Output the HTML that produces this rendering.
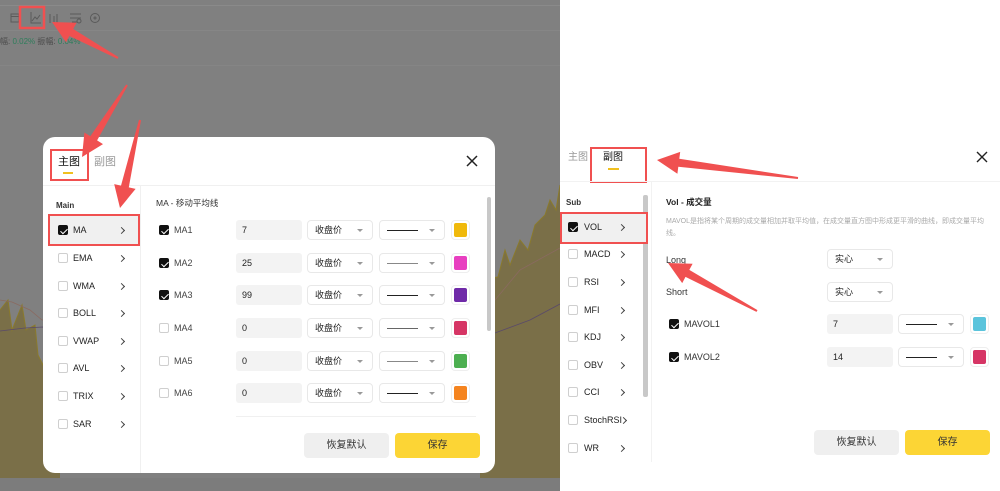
<!DOCTYPE html>
<html><head><meta charset="utf-8"><style>
*{margin:0;padding:0;box-sizing:border-box}
body{width:1000px;height:491px;overflow:hidden;position:relative;background:#fff;font-family:"Liberation Sans","Noto Sans CJK SC",sans-serif;color:#222}
.a{position:absolute}
.t{position:absolute;font-size:9px;line-height:12px;white-space:nowrap}
.cb{position:absolute;width:10px;height:10px;border:1px solid #cfcfcf;border-radius:2px;background:#fff}
.cb.on{background:#111;border-color:#111}
.cb.on::after{content:"";position:absolute;left:2.5px;top:0.5px;width:3px;height:6px;border:solid #fff;border-width:0 1.5px 1.5px 0;transform:rotate(45deg)}
.chev{position:absolute;width:5px;height:5px;border:solid #444;border-width:1.2px 1.2px 0 0;transform:rotate(45deg)}
.inp{position:absolute;background:#f3f3f3;border-radius:3px;height:20px;font-size:9px;line-height:20px;padding-left:6px;color:#222}
.sel{position:absolute;border:1px solid #e8e8e8;border-radius:4px;height:20px;font-size:9px;line-height:18px;padding-left:7px;background:#fff}
.sel::after{content:"";position:absolute;right:9px;top:8px;border:3px solid transparent;border-top:3.5px solid #999}
.ln{position:absolute;left:7px;top:9px;width:31px;height:1px;background:#222}
.sw{position:absolute;width:19px;height:20px;border:1px solid #eee;border-radius:4px;background:#fff}
.sw i{position:absolute;left:2px;top:2px;width:13px;height:14px;border-radius:2px}
.btn{position:absolute;border-radius:4px;font-size:10px;text-align:center;height:25px;line-height:25px}
</style></head><body>
<div class="a" style="left:0;top:0;width:560px;height:491px;background:#808080"></div>
<div class="a" style="left:0;top:5px;width:560px;height:1px;background:#8a8a8a"></div>
<div class="a" style="left:0;top:30px;width:560px;height:1px;background:#868686"></div>
<div class="a" style="left:0;top:65px;width:560px;height:1px;background:#858585"></div>
<svg class="a" style="left:0;top:0" width="560" height="491">
<polygon fill="#7a6f48" points="0,310 8,300 12,330 22,305 26,330 35,325 38,355 48,375 60,360 60,491 0,491"/>
<polyline fill="none" stroke="#8a7a2c" stroke-width="1" points="0,310 8,300 12,330 22,305 26,330 35,325 38,355 48,375 60,360"/>
<polygon fill="#7a6f48" points="480,280 498,277 505,250 510,265 520,240 528,250 535,225 545,215 550,200 556,210 560,185 560,491 480,491"/>
<polyline fill="none" stroke="#8a7a2c" stroke-width="1" points="480,280 498,277 505,250 510,265 520,240 528,250 535,225 545,215 550,200 556,210 560,185"/>
<polyline fill="none" stroke="#8a6a60" stroke-width="0.8" points="0,300 12,302 30,310 42,320 495,300 520,270 560,248"/>
<polyline fill="none" stroke="#5a4a6a" stroke-width="0.8" points="0,331 25,328 43,327 495,333 530,320 560,304"/>
<rect x="0" y="478" width="560" height="13" fill="#7c7c7c"/>
</svg>
<svg class="a" style="left:0;top:0" width="120" height="50">
<g fill="none" stroke="#5a5a5a" stroke-width="1">
<rect x="11" y="14" width="8" height="8"/><line x1="11" y1="16.5" x2="19" y2="16.5"/>
<polyline points="31,12 31,23 41,23"/><polyline points="32,21 35,17 37,19 40,15"/>
<path d="M50 14v9M54 16v7M57 14v9"/>
<path d="M70 14h11M70 18h11M72 22h5"/><circle cx="79" cy="21" r="2"/>
<circle cx="95" cy="18" r="4.5"/><circle cx="95" cy="18" r="1"/>
</g>
<rect x="20" y="7" width="24" height="21" fill="none" stroke="#f05050" stroke-width="2.5"/>
</svg>
<div class="t" style="left:0;top:36px;font-size:8px;color:#4a4a4a">幅: <span style="color:#2e7d5b">0.02%</span> 振幅: <span style="color:#2e7d5b">0.04%</span></div>

<div class="a" style="left:43px;top:137px;width:452px;height:336px;background:#fff;border-radius:12px"></div>
<div class="t" style="left:58px;top:156px;font-size:11px;color:#111">主图</div>
<div class="t" style="left:94px;top:156px;font-size:11px;color:#999">副图</div>
<div class="a" style="left:63px;top:172px;width:10px;height:2px;background:#f0c020"></div>
<div class="a" style="left:50px;top:149px;width:39px;height:32px;border:2.5px solid #f05050"></div>
<svg class="a" style="left:465px;top:154px" width="14" height="14"><path d="M2 2L12 12M12 2L2 12" stroke="#222" stroke-width="1.5"/></svg>
<div class="a" style="left:43px;top:185px;width:452px;height:1px;background:#f0f0f0"></div>
<div class="a" style="left:140px;top:186px;width:1px;height:287px;background:#f0f0f0"></div>
<div class="t" style="left:56px;top:200px;font-size:8px;font-weight:bold;color:#333">Main</div>
<div class="a" style="left:48px;top:214px;width:92px;height:32px;background:#f0f0f0;border:2.5px solid #f05050"></div>
<div class="cb on" style="left:58px;top:225px"></div><div class="t" style="left:73px;top:224px">MA</div><div class="chev" style="left:119px;top:228px"></div>
<div class="cb" style="left:58px;top:253px"></div><div class="t" style="left:73px;top:252px">EMA</div><div class="chev" style="left:119px;top:256px"></div>
<div class="cb" style="left:58px;top:281px"></div><div class="t" style="left:73px;top:280px">WMA</div><div class="chev" style="left:119px;top:284px"></div>
<div class="cb" style="left:58px;top:308px"></div><div class="t" style="left:73px;top:307px">BOLL</div><div class="chev" style="left:119px;top:311px"></div>
<div class="cb" style="left:58px;top:336px"></div><div class="t" style="left:73px;top:335px">VWAP</div><div class="chev" style="left:119px;top:339px"></div>
<div class="cb" style="left:58px;top:363px"></div><div class="t" style="left:73px;top:362px">AVL</div><div class="chev" style="left:119px;top:366px"></div>
<div class="cb" style="left:58px;top:391px"></div><div class="t" style="left:73px;top:390px">TRIX</div><div class="chev" style="left:119px;top:394px"></div>
<div class="cb" style="left:58px;top:419px"></div><div class="t" style="left:73px;top:418px">SAR</div><div class="chev" style="left:119px;top:422px"></div>
<div class="t" style="left:156px;top:197px;font-size:8.5px;color:#333">MA - 移动平均线</div>

<div class="cb on" style="left:159px;top:225px"></div><div class="t" style="left:174px;top:224px;color:#444">MA1</div>
<div class="inp" style="left:236px;top:220px;width:66px">7</div><div class="sel" style="left:307px;top:220px;width:66px">收盘价</div><div class="sel" style="left:379px;top:220px;width:66px"><div class="ln"></div></div><div class="sw" style="left:451px;top:220px"><i style="background:#f0b90b"></i></div>
<div class="cb on" style="left:159px;top:258px"></div><div class="t" style="left:174px;top:257px;color:#444">MA2</div>
<div class="inp" style="left:236px;top:253px;width:66px">25</div><div class="sel" style="left:307px;top:253px;width:66px">收盘价</div><div class="sel" style="left:379px;top:253px;width:66px"><div class="ln" style="background:#888"></div></div><div class="sw" style="left:451px;top:253px"><i style="background:#e83fc0"></i></div>
<div class="cb on" style="left:159px;top:290px"></div><div class="t" style="left:174px;top:289px;color:#444">MA3</div>
<div class="inp" style="left:236px;top:285px;width:66px">99</div><div class="sel" style="left:307px;top:285px;width:66px">收盘价</div><div class="sel" style="left:379px;top:285px;width:66px"><div class="ln"></div></div><div class="sw" style="left:451px;top:285px"><i style="background:#6f2aa8"></i></div>
<div class="cb" style="left:159px;top:323px"></div><div class="t" style="left:174px;top:322px;color:#444">MA4</div>
<div class="inp" style="left:236px;top:318px;width:66px">0</div><div class="sel" style="left:307px;top:318px;width:66px">收盘价</div><div class="sel" style="left:379px;top:318px;width:66px"><div class="ln" style="background:#666"></div></div><div class="sw" style="left:451px;top:318px"><i style="background:#d63565"></i></div>
<div class="cb" style="left:159px;top:356px"></div><div class="t" style="left:174px;top:355px;color:#444">MA5</div>
<div class="inp" style="left:236px;top:351px;width:66px">0</div><div class="sel" style="left:307px;top:351px;width:66px">收盘价</div><div class="sel" style="left:379px;top:351px;width:66px"><div class="ln" style="background:#888"></div></div><div class="sw" style="left:451px;top:351px"><i style="background:#4caf50"></i></div>
<div class="cb" style="left:159px;top:388px"></div><div class="t" style="left:174px;top:387px;color:#444">MA6</div>
<div class="inp" style="left:236px;top:383px;width:66px">0</div><div class="sel" style="left:307px;top:383px;width:66px">收盘价</div><div class="sel" style="left:379px;top:383px;width:66px"><div class="ln"></div></div><div class="sw" style="left:451px;top:383px"><i style="background:#f5841f"></i></div>
<div class="a" style="left:236px;top:416px;width:240px;height:3px;border-top:1px solid #f0f0f0"></div>
<div class="a" style="left:487px;top:197px;width:4px;height:134px;background:#c8c8c8;border-radius:2px"></div>
<div class="btn" style="left:304px;top:433px;width:85px;background:#efefef;color:#333">恢复默认</div>
<div class="btn" style="left:395px;top:433px;width:85px;background:#fcd535;color:#333">保存</div>

<div class="t" style="left:568px;top:152px;font-size:10px;color:#999">主图</div>
<div class="t" style="left:603px;top:152px;font-size:10px;color:#111">副图</div>
<div class="a" style="left:608px;top:168px;width:11px;height:2px;background:#f0c020"></div>
<div class="a" style="left:590px;top:147px;width:57px;height:36px;border:2.5px solid #f05050"></div>
<svg class="a" style="left:975px;top:150px" width="14" height="14"><path d="M2 2L12 12M12 2L2 12" stroke="#222" stroke-width="1.4"/></svg>
<div class="a" style="left:560px;top:181px;width:440px;height:1px;background:#f2f2f2"></div>
<div class="a" style="left:651px;top:182px;width:1px;height:280px;background:#f2f2f2"></div>
<div class="a" style="left:643px;top:195px;width:5px;height:202px;background:#c8c8c8;border-radius:2px"></div>
<div class="t" style="left:566px;top:197px;font-size:8px;font-weight:bold;color:#333">Sub</div>
<div class="a" style="left:560px;top:212px;width:88px;height:32px;background:#f0f0f0;border:2.5px solid #f05050"></div>
<div class="cb on" style="left:568px;top:222px"></div><div class="t" style="left:584px;top:221px">VOL</div><div class="chev" style="left:619px;top:225px"></div>
<div class="cb" style="left:568px;top:249px"></div><div class="t" style="left:584px;top:248px">MACD</div><div class="chev" style="left:619px;top:252px"></div>
<div class="cb" style="left:568px;top:277px"></div><div class="t" style="left:584px;top:276px">RSI</div><div class="chev" style="left:619px;top:280px"></div>
<div class="cb" style="left:568px;top:305px"></div><div class="t" style="left:584px;top:304px">MFI</div><div class="chev" style="left:619px;top:308px"></div>
<div class="cb" style="left:568px;top:332px"></div><div class="t" style="left:584px;top:331px">KDJ</div><div class="chev" style="left:619px;top:335px"></div>
<div class="cb" style="left:568px;top:360px"></div><div class="t" style="left:584px;top:359px">OBV</div><div class="chev" style="left:619px;top:363px"></div>
<div class="cb" style="left:568px;top:387px"></div><div class="t" style="left:584px;top:386px">CCI</div><div class="chev" style="left:619px;top:390px"></div>
<div class="cb" style="left:568px;top:415px"></div><div class="t" style="left:584px;top:414px">StochRSI</div><div class="chev" style="left:621px;top:418px"></div>
<div class="cb" style="left:568px;top:443px"></div><div class="t" style="left:584px;top:442px">WR</div><div class="chev" style="left:619px;top:446px"></div>
<div class="t" style="left:666px;top:196px;font-size:8.5px;font-weight:bold;color:#222">Vol - 成交量</div>
<div class="a" style="left:666px;top:216px;width:322px;font-size:7px;line-height:11.5px;color:#aaa">MAVOL是指将某个周期的成交量相加并取平均值，在成交量直方图中形成更平滑的曲线，即成交量平均线。</div>
<div class="t" style="left:666px;top:254px;color:#333">Long</div>
<div class="sel" style="left:827px;top:249px;width:66px">实心</div>
<div class="t" style="left:666px;top:286px;color:#333">Short</div>
<div class="sel" style="left:827px;top:282px;width:66px">实心</div>
<div class="cb on" style="left:669px;top:319px"></div><div class="t" style="left:684px;top:318px;color:#333">MAVOL1</div>
<div class="inp" style="left:827px;top:314px;width:66px">7</div><div class="sel" style="left:898px;top:314px;width:66px"><div class="ln"></div></div><div class="sw" style="left:970px;top:314px"><i style="background:#5bc4dc"></i></div>
<div class="cb on" style="left:669px;top:352px"></div><div class="t" style="left:684px;top:351px;color:#333">MAVOL2</div>
<div class="inp" style="left:827px;top:347px;width:66px">14</div><div class="sel" style="left:898px;top:347px;width:66px"><div class="ln"></div></div><div class="sw" style="left:970px;top:347px"><i style="background:#d63565"></i></div>
<div class="btn" style="left:814px;top:430px;width:85px;background:#efefef;color:#333">恢复默认</div>
<div class="btn" style="left:905px;top:430px;width:85px;background:#fcd535;color:#333">保存</div>

<svg class="a" style="left:0;top:0" width="1000" height="491">
<g fill="#f05050">
<polygon points="118.5,57.1 73.2,29 76.6,22.8 52,22 66,42.2 69.4,36 117.5,58.9"/>
<polygon points="127.8,85.5 97.1,140.4 103,144.1 82,157 84.4,132.5 90.3,136.2 126.2,84.5"/>
<polygon points="141,120.2 128.8,187.4 135.6,188.9 120,208 114.2,184.1 121,185.6 139,119.8"/>
<polygon points="798.1,177 679.3,158.8 680.2,151.9 657,160 677.4,173.7 678.3,166.8 797.9,179"/>
<polygon points="757.5,310.1 689.3,269.9 692.6,263.7 668,263 682.2,283.1 685.5,276.9 756.5,311.9"/>
</g>
</svg>
</body></html>
